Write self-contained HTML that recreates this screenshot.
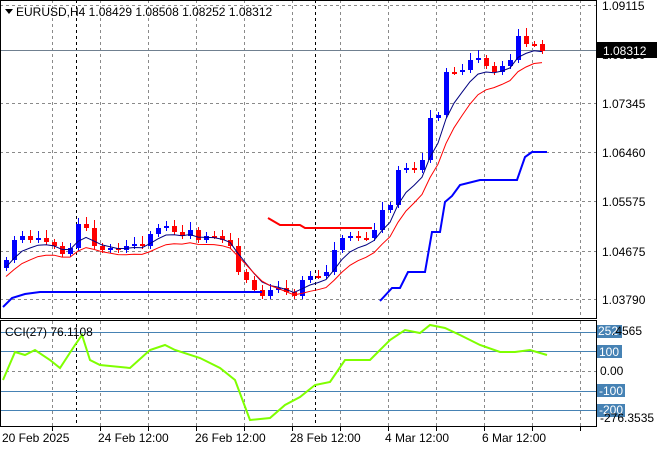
<!DOCTYPE html>
<html><head><meta charset="utf-8"><style>
body{margin:0;background:#fff;width:660px;height:450px;overflow:hidden;font-family:"Liberation Sans",sans-serif}
svg text{font-family:"Liberation Sans",sans-serif;font-size:12px}
</style></head><body>
<svg id="s" width="660" height="450" xmlns="http://www.w3.org/2000/svg">
<g id="grid" stroke="#8a8a8a" stroke-dasharray="3,3" stroke-width="1"></g>
<g id="chart"></g>
<rect x="0.5" y="0.5" width="596" height="318" fill="none" stroke="#000"/>
<rect x="0.5" y="320.5" width="596" height="106" fill="none" stroke="#000"/>
<text x="16" y="16" fill="#000">EURUSD,H4  1.08429 1.08508 1.08252 1.08312</text>
<path d="M5 9 L13 9 L9 14 Z" fill="#000"/>
<text x="5" y="336" fill="#000">CCI(27) 76.1108</text>
<g font-size="12">
<text x="602" y="10">1.09115</text>
<text x="602" y="108">1.07345</text>
<text x="602" y="157">1.06460</text>
<text x="602" y="206">1.05575</text>
<text x="602" y="256">1.04675</text>
<text x="602" y="304">1.03790</text>
<text x="602" y="59">1.08250</text>
<rect x="597" y="42" width="60" height="16" fill="#000"/>
<text x="603" y="55" fill="#fff">1.08312</text>
<rect x="597" y="325" width="25" height="13" fill="#4682b4"/>
<text x="598" y="335" fill="#fff">252</text>
<text x="612" y="335">.4565</text>
<rect x="597" y="345" width="25" height="13" fill="#4682b4"/>
<text x="599" y="356" fill="#fff">100</text>
<text x="600" y="375">0.00</text>
<rect x="597" y="384" width="28" height="13" fill="#4682b4"/>
<text x="599" y="395" fill="#fff">-100</text>
<rect x="597" y="404" width="28" height="13" fill="#4682b4"/>
<text x="599" y="414" fill="#fff">-200</text>
<text x="600" y="422">-276.3535</text>
<text x="2" y="442">20 Feb 2025</text>
<text x="98" y="442">24 Feb 12:00</text>
<text x="195" y="442">26 Feb 12:00</text>
<text x="290" y="442">28 Feb 12:00</text>
<text x="385" y="442">4 Mar 12:00</text>
<text x="482" y="442">6 Mar 12:00</text>
</g>
</svg>
<script>
var S='http://www.w3.org/2000/svg';
function el(p,t,a){var e=document.createElementNS(S,t);for(var k in a)e.setAttribute(k,a[k]);p.appendChild(e);return e;}
var g=document.getElementById('grid'),c=document.getElementById('chart');
[52,100,148,196,244,292,340,388,436,484,532,580].forEach(function(x){el(g,'line',{x1:x+.5,y1:0,x2:x+.5,y2:319});el(g,'line',{x1:x+.5,y1:321,x2:x+.5,y2:427});el(g,'line',{x1:x+.5,y1:427,x2:x+.5,y2:431,'stroke-dasharray':'none',stroke:'#000'});});
[76,315].forEach(function(x){el(g,'line',{x1:x+.5,y1:0,x2:x+.5,y2:427,stroke:'#000'});});
[5,103,152,201,251,299].forEach(function(y){el(g,'line',{x1:0,y1:y+.5,x2:597,y2:y+.5});});
el(g,'line',{x1:0,y1:371.5,x2:597,y2:371.5});
el(c,'line',{x1:0,y1:50.5,x2:597,y2:50.5,stroke:'#708090'});
[332,351,391,410].forEach(function(y){el(c,'line',{x1:0,y1:y+.5,x2:597,y2:y+.5,stroke:'#4682b4'});});
var ys=[260,240,236,240,238,242,246,254,248,224,228,246,250,248,250,246,244,246,234,228,226,232,236,230,240,236,236,240,246,272,280,290,296,290,288,292,296,280,276,276,272,250,238,236,238,238,230,210,205,170,168,170,160,118,115,72,72,70,60,58,66,72,66,60,36,44,44,51];
var prev=268,e1=268,e2=270,b=[],r=[];
ys.forEach(function(y,i){var x=6+8*i,o=prev,up=y<o,col=up?'#0000ff':'#ff0000';
var hi=Math.min(o,y)-3-(i*7%6),lo=Math.max(o,y)+3+(i*5%5);
el(c,'line',{x1:x+.5,y1:hi,x2:x+.5,y2:lo,stroke:col});
var t=Math.min(o,y),h=Math.max(Math.abs(o-y),2);el(c,'rect',{x:x-2,y:t,width:5,height:h,fill:col});
e1=e1+(y-e1)*0.35;e2=e2+(y-e2)*0.25;b.push(x+','+(e1+2).toFixed(1));r.push(x+','+(e2+9).toFixed(1));prev=y;});
el(c,'polyline',{points:b.join(' '),fill:'none',stroke:'#000080'});
el(c,'polyline',{points:r.join(' '),fill:'none',stroke:'#ff0000'});
el(c,'polyline',{points:'3,307 12,298 25,294 40,292 262,292',fill:'none',stroke:'#0000ff','stroke-width':2});
el(c,'polyline',{points:'268,218 280,225 300,225 305,228 372,228',fill:'none',stroke:'#ff0000','stroke-width':2});
el(c,'polyline',{points:'380,301 392,288 400,288 408,272 425,272 432,232 440,232 445,202 452,196 460,185 480,180 517,180 525,157 532,152 547,152',fill:'none',stroke:'#0000ff','stroke-width':2});
el(c,'polyline',{points:'3,380 15,352 25,355 35,350 50,360 60,368 75,345 82,335 90,360 100,365 130,368 150,350 165,345 175,350 200,358 220,368 235,380 250,420 270,418 285,405 300,397 315,385 330,382 345,360 370,360 380,350 390,340 405,330 420,333 430,325 445,328 460,335 480,345 500,352 515,352 530,350 547,355',fill:'none',stroke:'#7fff00','stroke-width':2});
</script>
</body></html>
